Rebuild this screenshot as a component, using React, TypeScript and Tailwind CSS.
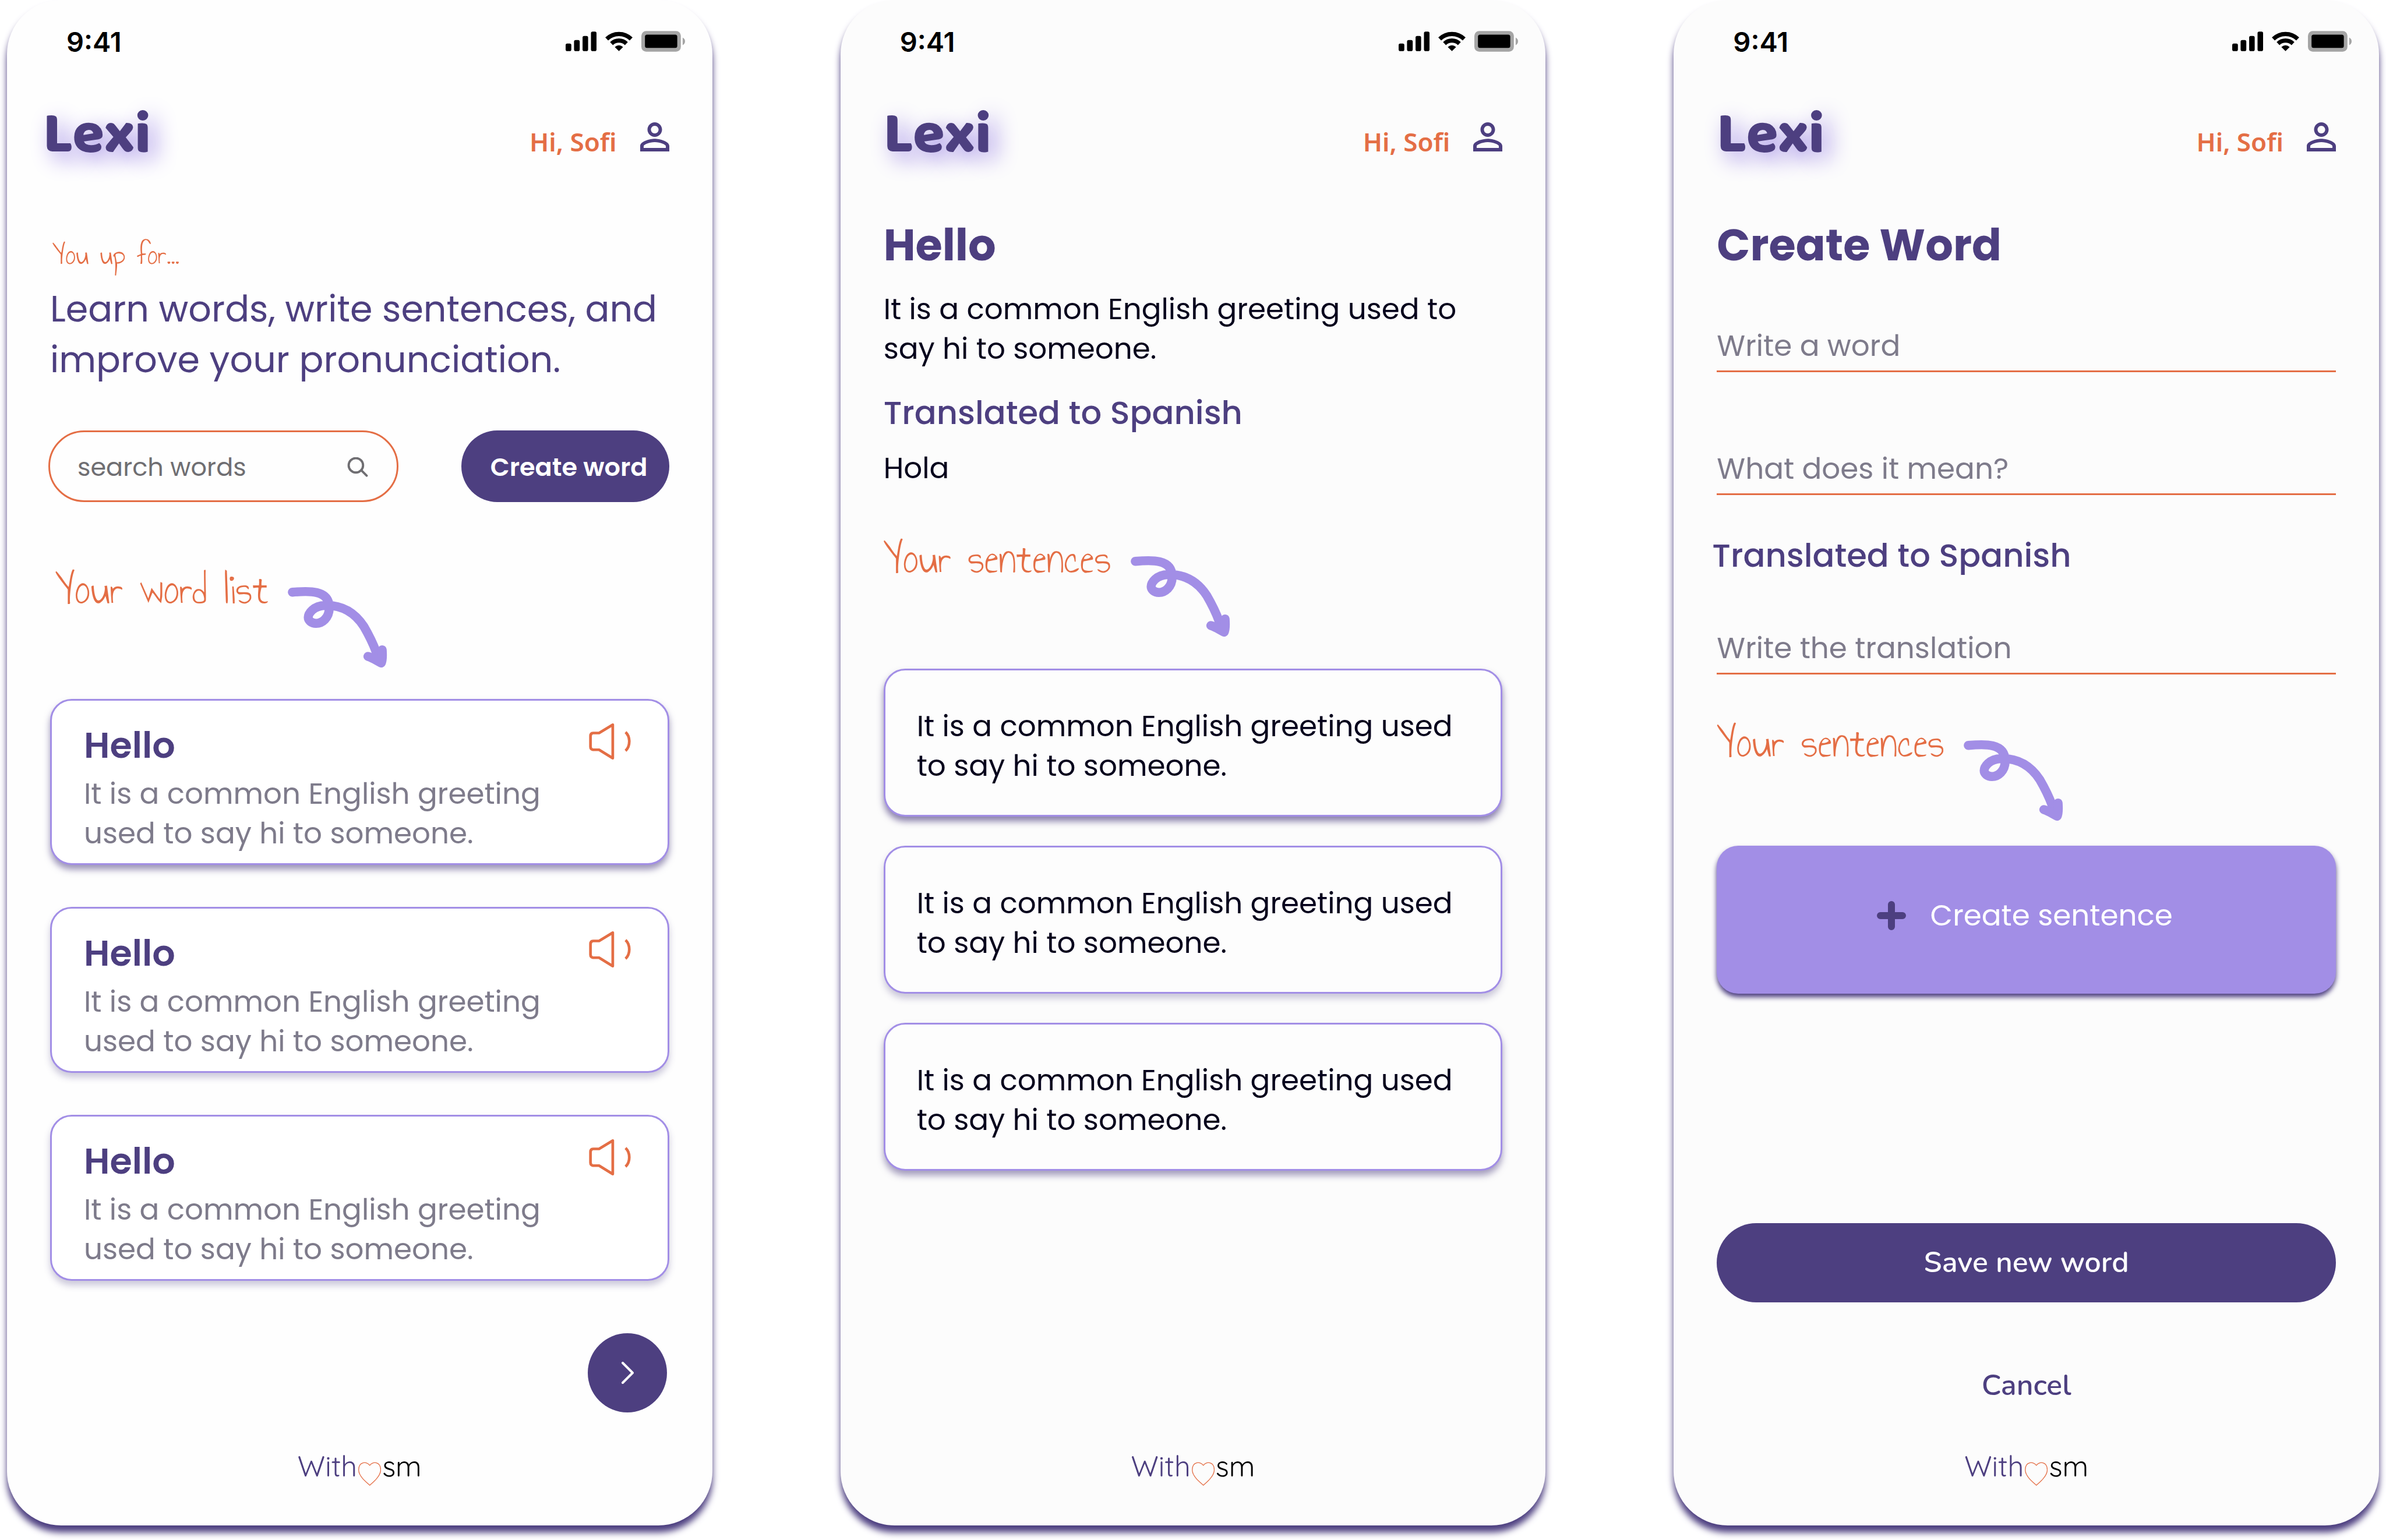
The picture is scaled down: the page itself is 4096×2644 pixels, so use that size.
import type { ReactNode } from "react";

const definition = "It is a common English greeting used to say hi to someone.";

function SignalIcon() {
  return (
    <svg className="h-[34px] w-[53px]" viewBox="31 91 206 130" aria-hidden="true">
      <rect x="31" y="171" width="38" height="50" rx="11" />
      <rect x="87" y="147" width="38" height="74" rx="11" />
      <rect x="144" y="120" width="37" height="101" rx="11" />
      <rect x="200" y="91" width="37" height="130" rx="11" />
    </svg>
  );
}

function WifiIcon() {
  return (
    <svg className="h-[34px] w-[47px]" viewBox="296 87 184 132" aria-hidden="true">
      <g fill="none" stroke="black" strokeWidth="28">
        <path d="M306 137A117 117 0 0 1 470 137" />
        <path d="M338 168A72 72 0 0 1 438 168" />
      </g>
      <path d="M388 219L360 191Q388 167 416 191Z" />
    </svg>
  );
}

function BatteryIcon() {
  return (
    <svg className="h-[36px] w-[75px]" viewBox="540 87 292 138" aria-hidden="true">
      <rect x="540" y="87" width="264" height="138" rx="32" fill="#a5a5a5" />
      <rect x="564" y="111" width="216" height="89" rx="14" />
      <path d="M816 131Q832 139 832 156Q832 173 816 181Z" fill="#a5a5a5" />
    </svg>
  );
}

function PersonIcon() {
  return (
    <svg className="h-[50px] w-[50px]" viewBox="4 4 16 16" fill="#4d3f80" aria-hidden="true">
      <path d="M12 5.9c1.16 0 2.1.94 2.1 2.1s-.94 2.1-2.1 2.1S9.9 9.16 9.9 8s.94-2.1 2.1-2.1m0 9c2.97 0 6.1 1.46 6.1 2.1v1.1H5.9V17c0-.64 3.13-2.1 6.1-2.1M12 4C9.79 4 8 5.79 8 8s1.79 4 4 4 4-1.79 4-4-1.79-4-4-4zm0 9c-2.67 0-8 1.34-8 4v3h16v-3c0-2.66-5.33-4-8-4z" />
    </svg>
  );
}

function SearchIcon() {
  return (
    <svg className="h-[34px] w-[36px] shrink-0" viewBox="0 0 46 44" fill="none" stroke="#6f6e72" strokeWidth="5" strokeLinecap="round" aria-hidden="true">
      <circle cx="19" cy="18" r="16" />
      <path d="M31 29L43 41" />
    </svg>
  );
}

function SpeakerIcon() {
  return (
    <svg className="h-[62px] w-[72px]" viewBox="72 66 276 240" fill="none" stroke="#e46e45" strokeWidth="18" strokeLinejoin="round" aria-hidden="true">
      <path d="M81 150Q81 130 101 130H138L229 75V297L138 241H101Q81 241 81 221Z" />
      <path d="M314 124C347 155 347 217 314 248" />
    </svg>
  );
}

function LoopArrow() {
  return (
    <svg className="mt-[33px] h-[139px] w-[171px]" viewBox="102 110 663 540" fill="none" stroke="#a28ee6" strokeWidth="60" strokeLinecap="round" strokeLinejoin="round" aria-hidden="true">
      <path d="M132 148C240 138 378 130 378 252C378 320 330 356 290 356C258 356 238 335 238 316C238 292 270 238 350 236C500 232 575 325 608 375C640 430 670 490 690 545" />
      <path d="M636 576C665 584 695 605 725 620C736 600 733 560 731 532" fill="#a28ee6" />
    </svg>
  );
}

function Phone({ tint, wide, children }: { tint: string; wide?: boolean; children: ReactNode }) {
  return (
    <section className={"flex min-w-0 flex-col rounded-[93px] px-[74px] pb-[68px] shadow-[0_12px_12px_#4d3f80] " + tint}>
      <div className="-mr-[27px] ml-[28px] flex h-[142px] items-center">
        <span className="font-['Inter',sans-serif] text-[47px] leading-none font-semibold text-black">9:41</span>
        <span className="ml-auto flex items-center gap-[15px]">
          <SignalIcon />
          <WifiIcon />
          <BatteryIcon />
        </span>
      </div>
      <header className="mt-[41px] flex items-baseline">
        <a
          href="#home"
          className={
            "font-['Baloo_2','Noto_Sans',sans-serif] text-[100px] leading-[99px] font-extrabold [text-shadow:12px_12px_37px_#a28ee6] " +
            (wide ? "-ml-[12px]" : "")
          }
        >
          Lexi
        </a>
        <span className="ml-auto font-['Noto_Sans',sans-serif] text-[44px] leading-[64px] font-semibold text-[#e46e45]">Hi, Sofi</span>
        <button type="button" aria-label="Profile" className="ml-[40px]">
          <PersonIcon />
        </button>
      </header>
      {children}
      <footer className="mt-auto flex items-start justify-center gap-[2px] font-['Quicksand','Open_Sans',sans-serif] text-[49px] leading-[68px] font-normal">
        <span>With</span>
        <svg className="mt-[27px] h-[41px] w-[39px]" viewBox="452 132 152 158" fill="none" stroke="#e46e45" strokeWidth="5" strokeLinejoin="round" aria-hidden="true">
          <path d="M529 154C508 124 453 128 455 187C456 225 500 262 529 287C558 262 600 225 602 187C604 128 549 124 529 154Z" />
        </svg>
        <span className="text-black">sm</span>
      </footer>
    </section>
  );
}

function ScriptHeading({ children, className }: { children: ReactNode; className: string }) {
  return (
    <div className={"flex items-start gap-[33px] " + className}>
      <h2 className="font-['Annie_Use_Your_Telescope',cursive] text-[75px] leading-[78px] text-[#e46e45]">{children}</h2>
      <LoopArrow />
    </div>
  );
}

function WordCard({ shadow }: { shadow: string }) {
  return (
    <article className={"flex h-[285px] items-start justify-between rounded-[37px] border-[3px] border-[#a28ee6] bg-white pr-[63px] pl-[55px] " + shadow}>
      <div className="mt-[33px] w-[840px]">
        <h3 className="text-[62px] leading-[87px] font-semibold">Hello</h3>
        <p className="mt-[6px] text-[50px] leading-[68px] text-[#7e7b8b]">{definition}</p>
      </div>
      <button type="button" aria-label="Listen to Hello" className="mt-[39px]">
        <SpeakerIcon />
      </button>
    </article>
  );
}

function SentenceCard({ shadow }: { shadow: string }) {
  return (
    <li className={"flex h-[254px] items-center rounded-[37px] border-[3px] border-[#a28ee6] bg-[#fdfdfd] px-[54px] pt-[12px] text-[50px] leading-[68px] text-[#05021c] " + shadow}>
      <p>{definition}</p>
    </li>
  );
}

function LineInput({ label, className }: { label: string; className: string }) {
  return (
    <input
      type="text"
      aria-label={label}
      placeholder={label}
      className={"block h-[80px] w-full border-b-[3px] border-[#e46e45] bg-transparent pb-[8px] text-[50px] leading-[68px] text-[#05021c] outline-none placeholder:text-[#7e7b8b] placeholder:opacity-100 " + className}
    />
  );
}

export default function App() {
  return (
    <main className="grid min-h-screen grid-cols-3 gap-[220px] bg-white px-[12px] pb-[25px] font-['Poppins','Inter',sans-serif] text-[#4d3f80]">
      <Phone tint="bg-[#fefefe]" wide>
        <p className="mt-[131px] pl-[4px] font-['Annie_Use_Your_Telescope',cursive] text-[50px] leading-[50px] text-[#e46e45]">You up for...</p>
        <h1 className="mt-[24px] text-[62px] leading-[87px]">Learn words, write sentences, and improve your pronunciation.</h1>
        <div className="mt-[78px] flex items-stretch gap-[108px]">
          <label className="-ml-[3px] flex h-[123px] min-w-0 flex-1 items-center rounded-full border-[3px] border-[#e46e45] pt-[3px] pr-[49px] pl-[47px]">
            <input
              type="search"
              aria-label="search words"
              placeholder="search words"
              className="min-w-0 flex-1 bg-transparent text-[43px] leading-[64px] outline-none placeholder:text-[#6f6e72] placeholder:opacity-100"
            />
            <SearchIcon />
          </label>
          <button type="button" className="w-[357px] rounded-full bg-[#4d3f80] pt-[3px] pl-[50px] text-left text-[43px] leading-[64px] font-semibold whitespace-nowrap text-white">
            Create word
          </button>
        </div>
        <ScriptHeading className="mt-[112px] pl-[9px]">Your word list</ScriptHeading>
        <div className="mt-[54px] flex flex-col gap-[72px]">
          <WordCard shadow="shadow-[0_8px_12px_rgba(77,63,128,0.55)]" />
          <WordCard shadow="shadow-[0_8px_12px_rgba(77,63,128,0.28)]" />
          <WordCard shadow="shadow-[0_8px_12px_rgba(77,63,128,0.28)]" />
        </div>
        <button type="button" aria-label="Next page" className="mt-[90px] mr-[4px] flex h-[136px] w-[136px] items-center justify-center self-end rounded-full bg-[#4d3f80]">
          <svg className="h-[38px] w-[22px]" viewBox="0 0 22 38" fill="none" stroke="white" strokeWidth="4" strokeLinecap="round" strokeLinejoin="round" aria-hidden="true">
            <path d="M3 2L20 19L3 36" />
          </svg>
        </button>
      </Phone>

      <Phone tint="bg-[#fcfcfc]">
        <h1 className="mt-[83px] text-[75px] leading-[111px] font-bold">Hello</h1>
        <p className="mt-[21px] text-[50px] leading-[68px] text-[#05021c]">{definition}</p>
        <h2 className="mt-[34px] text-[56px] leading-[84px] font-medium">Translated to Spanish</h2>
        <p className="mt-[19px] text-[50px] leading-[68px] text-[#05021c]">Hola</p>
        <ScriptHeading className="mt-[83px]">Your sentences</ScriptHeading>
        <ul className="mt-[55px] flex flex-col gap-[50px]">
          <SentenceCard shadow="shadow-[0_8px_12px_rgba(77,63,128,0.65)]" />
          <SentenceCard shadow="shadow-[0_8px_12px_rgba(77,63,128,0.28)]" />
          <SentenceCard shadow="shadow-[0_8px_12px_rgba(77,63,128,0.5)]" />
        </ul>
      </Phone>

      <Phone tint="bg-[#fcfcfc]">
        <h1 className="mt-[83px] text-[75px] leading-[111px] font-bold">Create Word</h1>
        <LineInput label="Write a word" className="mt-[83px]" />
        <LineInput label="What does it mean?" className="mt-[131px]" />
        <h2 className="mt-[62px] -ml-[8px] text-[56px] leading-[84px] font-medium">Translated to Spanish</h2>
        <LineInput label="Write the translation" className="mt-[82px]" />
        <ScriptHeading className="mt-[79px]">Your sentences</ScriptHeading>
        <button type="button" className="mt-[43px] flex h-[254px] items-center justify-center gap-[42px] rounded-[37px] bg-[#a28ee6] pr-[6px] pb-[14px] text-[50px] leading-[68px] text-white shadow-[0_6px_9px_#4d3f80]">
          <svg className="h-[50px] w-[50px]" viewBox="0 0 50 50" stroke="#4d3f80" strokeWidth="12" strokeLinecap="round" aria-hidden="true">
            <path d="M25 6V44M6 25H44" />
          </svg>
          Create sentence
        </button>
        <button type="button" className="mt-[394px] h-[136px] rounded-full bg-[#4d3f80] font-['Nunito','Open_Sans',sans-serif] text-[50px] leading-[68px] font-semibold text-white">
          Save new word
        </button>
        <button type="button" className="mt-[109px] self-center font-['Nunito','Open_Sans',sans-serif] text-[50px] leading-[68px] font-semibold">
          Cancel
        </button>
      </Phone>
    </main>
  );
}
